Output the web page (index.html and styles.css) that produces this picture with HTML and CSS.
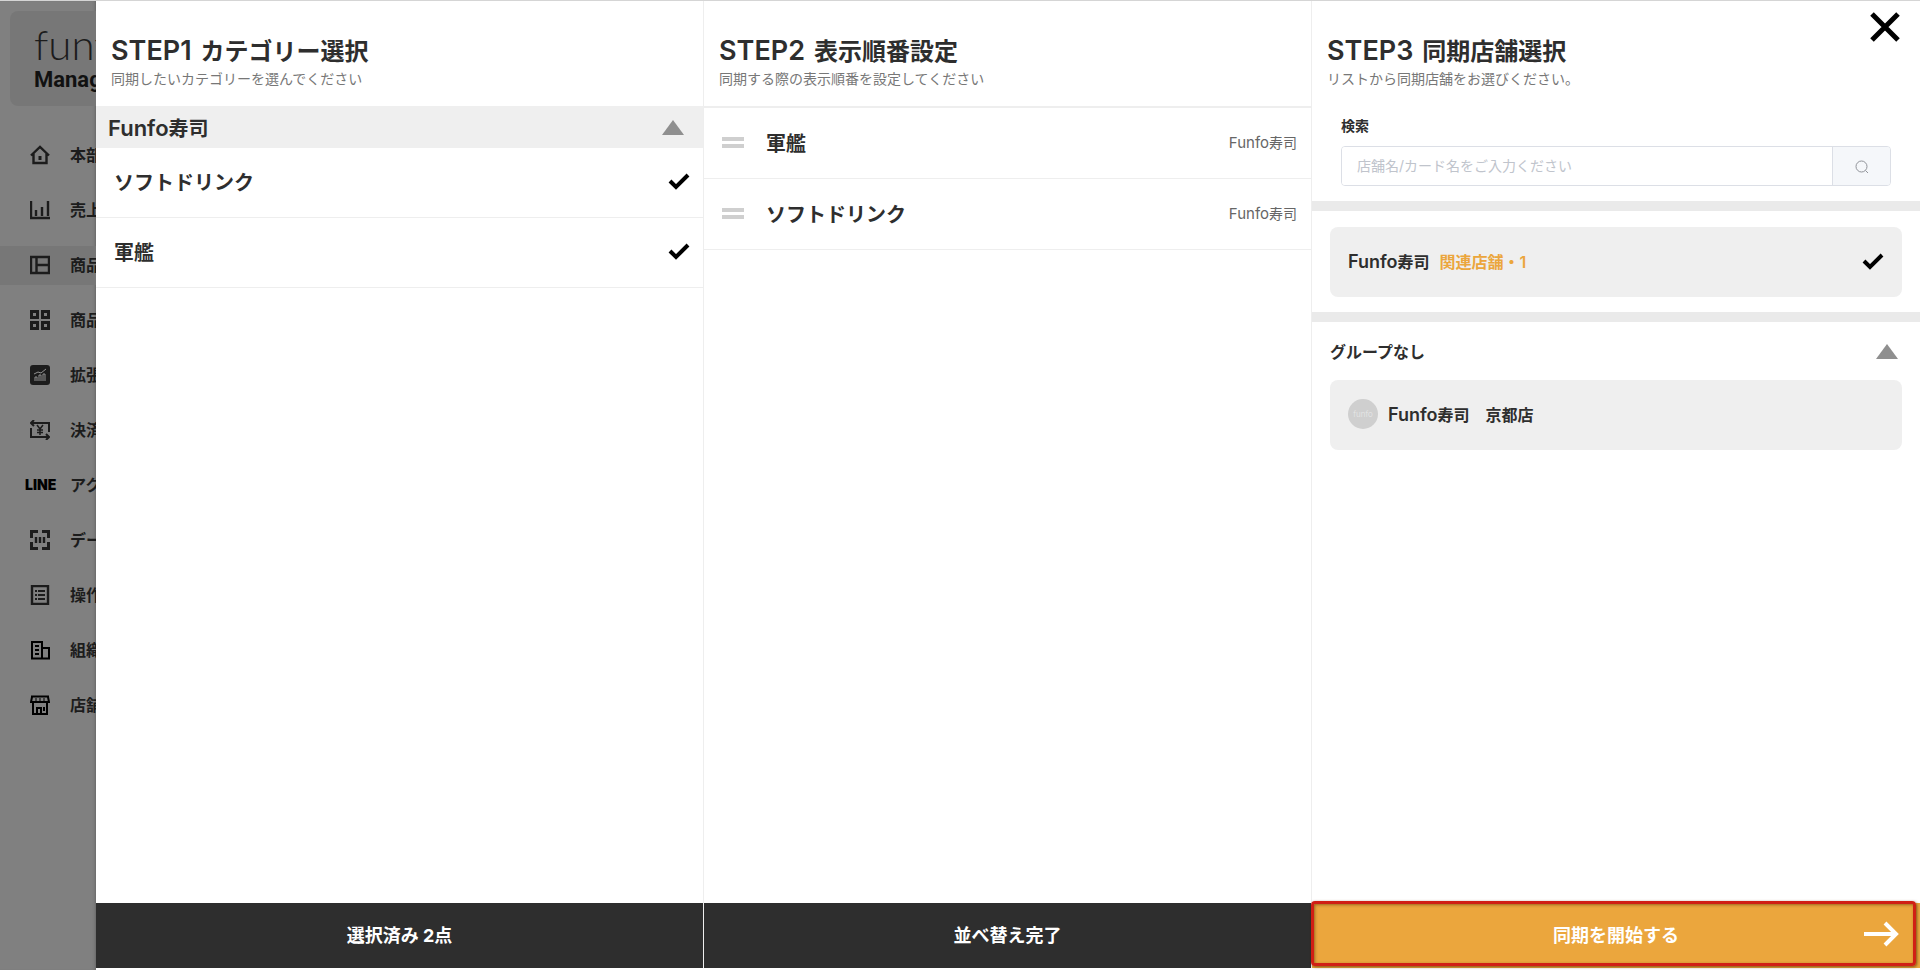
FILE: index.html
```
<!DOCTYPE html>
<html lang="ja">
<head>
    <meta charset="UTF-8">
    <title>funfo Manager</title>
    <link rel="stylesheet" href="styles.css">
</head>
<body>
    <aside class="sidebar">
        <div class="logo">
            <span class="logo-name">funfo</span>
            <span class="logo-sub">Manager</span>
        </div>
        <nav class="menu">
            <a href="#"><svg viewBox="0 0 20 20"><path d="M1 10.500L10 2l9 8.500M3.500 8.500V18h13V8.500"/><path d="M10 11v4" stroke-width="3"/></svg><span>本部</span></a>
            <a href="#"><svg viewBox="0 0 20 20"><path d="M1 1v17h19M6 10v6M12 7v9M18 1v15"/></svg><span>売上</span></a>
            <a href="#" class="active"><svg viewBox="0 0 20 20"><path d="M1 2h18v16H1zM6.500 2v16M6.500 10H19"/></svg><span>商品</span></a>
            <a href="#"><svg viewBox="0 0 20 20"><path d="M1.500 1.500h6v6h-6zM12.500 1.500h6v6h-6zM1.500 12.500h6v6h-6zM12.500 12.500h6v6h-6z" stroke-width="3"/></svg><span>商品</span></a>
            <a href="#"><svg viewBox="0 0 20 20"><rect width="20" height="20" rx="3" fill="#1c1c1c" stroke="none"/><path d="M5 16v-4h2v4M9 16v-6h2v6M13 16V9h2v7M4 9l4-2 3 1 5-4" stroke="#909090" stroke-width="1"/></svg><span>拡張</span></a>
            <a href="#"><svg viewBox="0 0 20 20"><path d="M4 0L1 3l3 3M1 3h18v9M16 14l3 3-3 3M19 17H1V8" stroke-width="2"/><path d="M7 5l3 4 3-4M10 9v6M7 10h6M7 12.500h6" stroke-width="1.500"/></svg><span>決済</span></a>
            <a href="#"><b class="line-mark">LINE</b><span>アク</span></a>
            <a href="#"><svg viewBox="0 0 20 20"><path d="M1.500 8V1.500H8M12 1.500h6.500V8M18.500 12v6.500H12M8 18.500H1.500V12" stroke-width="3"/><path d="M6 7v6M10 7v6M14 7v6"/></svg><span>デー</span></a>
            <a href="#"><svg viewBox="0 0 20 20"><path d="M2 1h16v18H2z"/><path d="M5 6h2M8 6h7M5 10h2M8 10h7M5 14h2M8 14h7" stroke-width="2"/></svg><span>操作</span></a>
            <a href="#"><svg viewBox="0 0 20 20" class="dark"><path d="M2 18.500V2h10v16.500M12 8h7v10.500M1 18.500h19M5 6h4M5 10h4M5 14h4"/></svg><span>組織</span></a>
            <a href="#"><svg viewBox="0 0 20 20" class="dark"><path d="M1 1.500h18M2 2L1 7h18l-1-5M3 8v11h14V8M7 19v-6h4v6M14 12v4"/><path d="M6 3v3M10 3v3M14 3v3" stroke-width="1"/></svg><span>店舗</span></a>
        </nav>
    </aside>

    <main class="steps">
        <section class="step">
            <header class="step-head">
                <h2><span>STEP1</span>カテゴリー選択</h2>
                <p>同期したいカテゴリーを選んでください</p>
            </header>
            <button type="button" class="group-bar"><span><span class="en">Funfo</span>寿司</span><i class="triangle"></i></button>
            <ul class="category-list">
                <li>ソフトドリンク<svg class="check" viewBox="0 0 22 18"><path d="M2 9l6 6L20 3"/></svg></li>
                <li>軍艦<svg class="check" viewBox="0 0 22 18"><path d="M2 9l6 6L20 3"/></svg></li>
            </ul>
            <button type="button" class="foot-btn">選択済み 2点</button>
        </section>

        <section class="step">
            <header class="step-head">
                <h2><span>STEP2</span>表示順番設定</h2>
                <p>同期する際の表示順番を設定してください</p>
            </header>
            <ul class="order-list">
                <li><i class="handle"></i>軍艦<small><span class="en">Funfo</span>寿司</small></li>
                <li><i class="handle"></i>ソフトドリンク<small><span class="en">Funfo</span>寿司</small></li>
            </ul>
            <button type="button" class="foot-btn">並べ替え完了</button>
        </section>

        <section class="step">
            <button type="button" class="close" aria-label="閉じる">
                <svg viewBox="0 0 30 30"><path d="M2 2l26 26M28 2L2 28"/></svg>
            </button>
            <header class="step-head">
                <h2><span>STEP3</span>同期店舗選択</h2>
                <p>リストから同期店舗をお選びください。</p>
            </header>
            <form class="search">
                <label for="keyword">検索</label>
                <div class="search-box">
                    <input type="text" id="keyword" placeholder="店舗名/カード名をご入力ください">
                    <button type="button" aria-label="検索"><svg viewBox="0 0 14 14"><circle cx="6.500" cy="6.500" r="5.500"/><path d="M10.500 10.500L13 13"/></svg></button>
                </div>
            </form>
            <div class="shop-block">
                <div class="shop-card"><span class="en">Funfo</span>寿司<span class="related">関連店舗・1</span><svg class="check" viewBox="0 0 22 18"><path d="M2 9l6 6L20 3"/></svg></div>
            </div>
            <div class="shop-group">
                <button type="button" class="group-title">グループなし<i class="triangle"></i></button>
                <div class="shop-card"><span class="avatar">funfo</span><span class="en">Funfo</span>寿司　京都店</div>
            </div>
            <button type="button" class="foot-btn start">同期を開始する
                <svg class="arrow" viewBox="0 0 36 26"><path d="M1 13h32M22 2l11 11-11 11"/></svg>
            </button>
        </section>
    </main>
</body>
</html>
```
FILE: styles.css
```
* { box-sizing: border-box; }
body { margin: 0; height: 100vh; display: flex; overflow: hidden; border-top: 1px solid #d5d5d5; background: #fff; color: #2e2e2e; font-family: Inter, "Noto Sans CJK JP", sans-serif; }
h2, p, ul { margin: 0; padding: 0; }
ul { list-style: none; }
button, input { font-family: inherit; color: inherit; }
button { border: none; background: none; padding: 0; cursor: pointer; }
svg { fill: none; stroke: currentColor; flex: none; }

/* sidebar */
.sidebar { width: 96px; flex: none; overflow: hidden; background: #808080; color: #1c1c1c; box-shadow: inset -3px 0 3px -2px #666; }
.logo { width: 200px; height: 95px; margin: 10px 0 0 10px; padding: 9px 0 0 24px; border-radius: 8px; background: #777; display: flex; flex-direction: column; }
.logo-name { font-size: 42px; font-weight: 300; line-height: 48px; font-family: Lato, sans-serif; }
.logo-sub { font-size: 22px; font-weight: 700; line-height: 24px; font-family: Roboto, sans-serif; color: #111; }
.menu { margin-top: 30px; display: flex; flex-direction: column; gap: 16px; }
.menu a { height: 39px; padding: 0 0 2px 24px; display: flex; align-items: center; color: inherit; text-decoration: none; font-size: 16px; font-weight: 700; white-space: nowrap; }
.menu a.active { background: #777; }
.menu span { padding-bottom: 2px; }
.menu svg { width: 20px; height: 20px; margin: 0 20px 0 6px; stroke-width: 2.4; }
.menu .dark { color: #000; stroke-width: 2; }
.line-mark { width: 46px; flex: none; padding-left: 1px; font-size: 14px; font-weight: 900; color: #000; }

/* step columns */
.steps { flex: 1; display: grid; grid-template-columns: repeat(3, 1fr); padding-bottom: 2px; }
.step { position: relative; display: flex; flex-direction: column; min-width: 0; border-right: 1px solid #eee; }
.step:last-child { border-right: none; }
.step-head { height: 105px; padding: 32px 15px 0; }
.step-head h2 { font-size: 24px; line-height: 36px; font-weight: 700; }
.step-head h2 span { margin-right: 9px; font-size: 27px; font-weight: 600; }
.step-head p { font-size: 14px; line-height: 18px; color: #777; }
.triangle { border: 11px solid transparent; border-top: none; border-bottom: 15px solid #8f8f8f; }
.check { width: 22px; height: 18px; stroke: #000; stroke-width: 4; }

.group-bar { height: 42px; padding: 0 19px 0 12px; display: flex; align-items: center; justify-content: space-between; background: #efefef; font-size: 20px; font-weight: 600; }
.group-bar .en { font-size: 22px; }
.category-list li { height: 70px; padding: 0 13px 3px 18px; display: flex; align-items: center; justify-content: space-between; border-bottom: 1px solid #eee; font-size: 20px; font-weight: 700; }

.order-list { border-top: 2px solid #eee; }
.order-list li { height: 71px; padding: 0 14px 2px 18px; display: flex; align-items: center; border-bottom: 1px solid #eee; font-size: 20px; font-weight: 700; }
.order-list small { margin-left: auto; font-size: 14px; font-weight: 400; color: #666; }
.order-list .en { font-size: 15px; }
.handle { width: 22px; height: 11px; margin-right: 22px; border: solid #cfcfcf; border-width: 4px 0; }

.foot-btn { margin-top: auto; height: 65px; padding-bottom: 3px; background: #2e2e2e; color: #fff; font-size: 18px; font-weight: 700; }

/* step 3 */
.close { position: absolute; top: 11px; right: 20px; width: 30px; height: 30px; }
.close svg { width: 30px; height: 30px; stroke: #000; stroke-width: 5; }
.search { padding: 10px 29px 15px; border-bottom: 10px solid #eaeaea; }
.search label { display: block; font-size: 14px; line-height: 20px; font-weight: 700; }
.search-box { display: flex; height: 40px; margin-top: 10px; border: 1px solid #dcdfe6; border-radius: 4px; overflow: hidden; }
.search-box input { flex: 1; min-width: 0; padding: 0 15px 2px; border: none; outline: none; font-size: 14px; }
.search-box input::placeholder { color: #c0c4cc; }
.search-box button { width: 58px; border-left: 1px solid #dcdfe6; background: #f5f7fa; color: #909399; }
.search-box svg { width: 14px; height: 14px; vertical-align: middle; }
.shop-block { padding: 16px 18px 15px; border-bottom: 10px solid #eaeaea; }
.shop-card { height: 70px; padding: 0 18px 2px; display: flex; align-items: center; border-radius: 8px; background: #efefef; font-size: 16px; font-weight: 600; }
.shop-card .check { margin-left: auto; }
.shop-card .en { font-size: 18px; }
.related { margin-left: 10px; color: #eba63d; }
.shop-group { padding: 0 18px; }
.group-title { width: 100%; height: 58px; padding-right: 4px; display: flex; align-items: center; justify-content: space-between; font-size: 16px; font-weight: 700; }
.avatar { width: 30px; height: 30px; margin-right: 10px; border-radius: 50%; background: #cfcfcf; color: #e8e8e8; font-size: 8px; font-weight: 300; line-height: 30px; text-align: center; }
.start { position: relative; display: flex; align-items: center; justify-content: center; background: #eba63d; }
.start::after { content: ""; position: absolute; inset: -2px 4px 2px -1px; border: 3px solid #d01f15; border-radius: 4px; box-shadow: 1px 1px 3px rgba(80, 40, 0, .7), inset 1px 1px 3px rgba(80, 40, 0, .5); }
.arrow { position: absolute; right: 21px; width: 36px; height: 26px; stroke-width: 4; }
```
